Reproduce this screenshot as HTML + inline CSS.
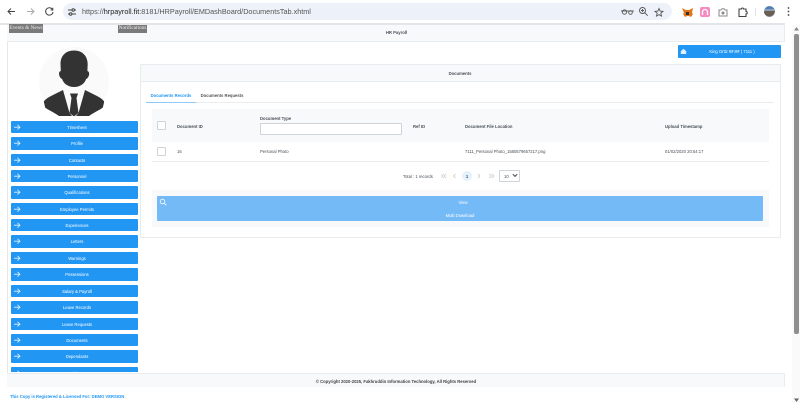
<!DOCTYPE html>
<html><head><meta charset="utf-8"><title>Documents</title>
<style>
html{background:#fff}
html,body{margin:0;padding:0;width:800px;height:403px;overflow:hidden}
body{font-family:"Liberation Sans",sans-serif;position:relative;color:#495057;background:#fff;filter:blur(.3px)}
.a{position:absolute}
.t{position:absolute;font-size:4.2px;line-height:6px;white-space:nowrap;color:#495057}
.b{font-weight:bold}
.c{transform:translateX(-50%)}
.btn{position:absolute;left:4px;width:127px;height:12.4px;box-sizing:border-box;padding-left:5px;background:#2196f3;border-radius:1px;color:#fff;font-size:4.2px;line-height:13.4px;text-align:center}
.btn svg{position:absolute;left:3px;top:3px}
.cb{position:absolute;width:7px;height:7px;background:#fff;border:.7px solid #ced4da;border-radius:1px}
</style></head><body>
<!-- browser bar -->
<div class="a" style="left:0;top:0;width:800px;height:23px;background:#fff"></div>
<svg class="a" style="left:0;top:0" width="70" height="23" fill="none" stroke-width="1">
<path d="M15 11.500H8M11 8.500l-3 3 3 3" stroke="#444"/>
<path d="M27 11.500h7M31 8.500l3 3-3 3" stroke="#aaa"/>
<path d="M52.500 9.500a3.700 3.700 0 1 0 .5 2.500M52.800 7.800v2.200h-2.200" stroke="#444"/>
</svg>
<div class="a" style="left:63px;top:3px;width:609px;height:17px;background:#edf2fa;border-radius:9px"></div>
<svg class="a" style="left:67px;top:7px" width="10" height="10" fill="none" stroke="#444" stroke-width="1"><path d="M1 3h4M7.500 3h1.500M1 7h1.500M5 7h4"/><circle cx="6.200" cy="3" r="1.200"/><circle cx="3.700" cy="7" r="1.200"/></svg>
<div class="t" style="left:82px;top:5px;font-size:7.25px;line-height:13px;color:#555">https://<span style="color:#222">hrpayroll.fit</span>:8181/HRPayroll/EMDashBoard/DocumentsTab.xhtml</div>
<svg class="a" style="left:618px;top:5px" width="50" height="14" fill="none" stroke="#555" stroke-width=".9">
<circle cx="6.500" cy="7" r="2.200"/><circle cx="12.500" cy="7.500" r="1.800"/><path d="M3 6h13"/>
<circle cx="24.500" cy="5.500" r="3"/><path d="M26.700 7.700l3 3"/><path d="M23 5.500h3M24.500 4v3"/>
<path d="M41 3.500l1.100 2.600 2.900.3-2.200 1.900.7 2.800-2.500-1.500-2.500 1.500.7-2.800-2.200-1.900 2.900-.3z"/>
</svg>
<svg class="a" style="left:680px;top:5px" width="120" height="16">
<path d="M2 3l4 2h3l4-2-1 5 1 1-2 3-2-1H7l-2 1-2-3 1-1z" fill="#e2761b"/><path d="M6 7h3v3H6z" fill="#333"/>
<rect x="20" y="2" width="10" height="10" rx="2" fill="#f78ac0"/><path d="M22.500 10V7a2.500 2.500 0 0 1 5 0v3" fill="none" stroke="#fff" stroke-width="1.300"/>
<path d="M39 5h2l1-1.300h2l1 1.300h2v6h-8z" fill="none" stroke="#888" stroke-width="1"/><circle cx="43" cy="8" r="1.500" fill="#888"/>
<path d="M59 4h2.500a1 1 0 0 1 2 0H66v2.500a1 1 0 0 1 0 2.500v2.500h-7z" fill="none" stroke="#444" stroke-width="1.100"/>
<rect x="75" y="3" width=".7" height="8" fill="#cfd8e6"/>
<circle cx="89.500" cy="6.500" r="5.500" fill="#8aa0b8"/><path d="M84.200 6h10.600a5.500 5.500 0 0 1-10.600 2z" fill="#6a5f50"/><path d="M84.800 4a5.500 5.500 0 0 1 9.400 0z" fill="#4f7fb5"/>
<circle cx="108.500" cy="3" r=".9" fill="#444"/><circle cx="108.500" cy="6.500" r=".9" fill="#444"/><circle cx="108.500" cy="10" r=".9" fill="#444"/>
</svg>
<div class="a" style="left:0;top:23px;width:785px;height:2px;background:#e3e5e8"></div>

<!-- page frame -->
<div class="a" style="left:7px;top:25px;width:.6px;height:362px;background:#e6e8ea"></div>
<div class="a" style="left:7px;top:25px;width:778px;height:16.500px;background:#f8f9fa;border-bottom:.7px solid #e9ecef;border-right:.7px solid #e9ecef;box-sizing:border-box"></div>
<div class="a" style="left:9px;top:24px;width:34px;height:9px;background:#7a7a7a;font:5.300px/8px 'Liberation Serif',serif;color:#eee;text-align:center;white-space:nowrap">Events &amp; News</div>
<div class="a" style="left:118px;top:25px;width:29px;height:8px;background:#7a7a7a;font:5.300px/7.500px 'Liberation Serif',serif;color:#eee;text-align:center;white-space:nowrap">Notifications</div>
<div class="t b c" style="left:396.500px;top:30px">HR Payroll</div>

<!-- avatar -->
<svg class="a" style="left:39px;top:47px" width="71" height="70" viewBox="0 0 71 70">
<defs><clipPath id="av"><path d="M35 0a35 35 0 0 1 31 51L62 69H8L4 51A35 35 0 0 1 35 0z"/></clipPath></defs>
<circle cx="35" cy="35" r="35" fill="#fafafa"/>
<g clip-path="url(#av)" fill="#333">
<path d="M35 3.500c-9 0-13.500 6-13.500 13.500l.3 7c-1.500.5-2 2-1.700 3.500.3 2 1.500 4 3 4.500 1.500 5 6.500 8 12 8s10.500-3 12-8c1.500-.5 2.700-2.500 3-4.500.3-1.500-.2-3-1.700-3.500l.3-7C48.500 9.500 44 3.500 35 3.500z"/>
<path d="M24 43L12 49c-5 2.500-7.500 5-8 7.500-.3 2 2 4.500 6 6.500 5 2.800 8 4.500 10 6h30c2-1.500 5-3.200 10-6 4-2 6.300-4.500 6-6.500-.5-2.500-3-5-8-7.500L46 43 39.500 66 37 69H33l-2.500-3z"/>
<path d="M31 46.500h8l-1.500 4.500 2 15-4.500 3.500-4.500-3.500 2-15z"/>
</g></svg>

<!-- sidebar -->
<div class="a" style="left:7px;top:121px;width:135px;height:251px;overflow:hidden">
<svg width="0" height="0" style="position:absolute"><defs><g id="ar" fill="none" stroke="#dff0ff" stroke-width=".8"><path d="M0 3.200h6M3.500 .8L6 3.200 3.500 5.600"/></g></defs></svg>
<div class="btn" style="top:0"><svg width="7" height="7"><use href="#ar"/></svg>Timesheet</div>
<div class="btn" style="top:16.350px"><svg width="7" height="7"><use href="#ar"/></svg>Profile</div>
<div class="btn" style="top:32.700px"><svg width="7" height="7"><use href="#ar"/></svg>Contacts</div>
<div class="btn" style="top:49.050px"><svg width="7" height="7"><use href="#ar"/></svg>Personnel</div>
<div class="btn" style="top:65.400px"><svg width="7" height="7"><use href="#ar"/></svg>Qualifications</div>
<div class="btn" style="top:81.750px"><svg width="7" height="7"><use href="#ar"/></svg>Employee Permits</div>
<div class="btn" style="top:98.100px"><svg width="7" height="7"><use href="#ar"/></svg>Experiences</div>
<div class="btn" style="top:114.450px"><svg width="7" height="7"><use href="#ar"/></svg>Letters</div>
<div class="btn" style="top:131px"><svg width="7" height="7"><use href="#ar"/></svg>Warnings</div>
<div class="btn" style="top:147.400px"><svg width="7" height="7"><use href="#ar"/></svg>Possessions</div>
<div class="btn" style="top:163.800px"><svg width="7" height="7"><use href="#ar"/></svg>Salary &amp; Payroll</div>
<div class="btn" style="top:180.200px"><svg width="7" height="7"><use href="#ar"/></svg>Leave Records</div>
<div class="btn" style="top:196.600px"><svg width="7" height="7"><use href="#ar"/></svg>Leave Requests</div>
<div class="btn" style="top:213px"><svg width="7" height="7"><use href="#ar"/></svg>Documents</div>
<div class="btn" style="top:229.400px"><svg width="7" height="7"><use href="#ar"/></svg>Dependants</div>
<div class="btn" style="top:246px"><svg width="7" height="7"><use href="#ar"/></svg>Address</div>
</div>

<!-- user button -->
<div class="a" style="left:678px;top:45px;width:103px;height:13px;background:#2196f3;border-radius:1px"></div>
<svg class="a" style="left:680px;top:48px" width="8" height="7" fill="#dff0ff"><path d="M.8 3.200L3.500.8l2.700 2.400V6H.8z"/></svg>
<div class="t c" style="left:732px;top:49px;color:#fff">King Ortiz <b>##:##</b> ( 7111 )</div>

<!-- panel -->
<div class="a" style="left:140px;top:64px;width:641px;height:174px;border:.7px solid #e9ecef;box-sizing:border-box;background:#fff"></div>
<div class="a" style="left:140px;top:64px;width:641px;height:17.500px;background:#f8f9fa;border:.7px solid #e9ecef;box-sizing:border-box"></div>
<div class="t b c" style="left:460px;top:70.500px">Documents</div>

<!-- tabs -->
<div class="a" style="left:146px;top:102px;width:628px;height:.8px;background:#e9ecef"></div>
<div class="a" style="left:146px;top:102px;width:50px;height:1px;background:#90caf9"></div>
<div class="t b c" style="left:171px;top:92.500px;color:#2196f3">Documents Records</div>
<div class="t b c" style="left:222px;top:92.500px;color:#555">Documents Requests</div>

<!-- table -->
<div class="a" style="left:152px;top:109px;width:617px;height:33px;background:#f8f9fa"></div>
<div class="a" style="left:152px;top:161px;width:617px;height:.7px;background:#e9ecef"></div>
<div class="cb" style="left:157px;top:121px"></div>
<div class="cb" style="left:157px;top:147px"></div>
<div class="t b" style="left:177px;top:123.500px">Document ID</div>
<div class="t b" style="left:260px;top:115.500px">Document Type</div>
<div class="a" style="left:260px;top:123px;width:142px;height:12px;background:#fff;border:.7px solid #ced4da;box-sizing:border-box;border-radius:1px"></div>
<div class="t b" style="left:413px;top:123.500px">Ref ID</div>
<div class="t b" style="left:465px;top:123.500px">Document File Location</div>
<div class="t b" style="left:665px;top:123.500px">Upload Timestamp</div>
<div class="t" style="left:177px;top:149px">16</div>
<div class="t" style="left:260px;top:149px">Personal Photo</div>
<div class="t" style="left:465px;top:149px">7111_Personal Photo_1580579657217.png</div>
<div class="t" style="left:665px;top:149px">01/02/2020 20:54:17</div>

<!-- paginator -->
<div class="t" style="left:403px;top:173.500px">Total : 1 records</div>
<svg class="a" style="left:440px;top:172px" width="56" height="8" fill="none" stroke="#bbb" stroke-width=".6">
<path d="M3.500 2L1.500 4l2 2M6 2L4 4l2 2M15.500 2l-2 2 2 2M38 2l2 2-2 2M49.500 2l2 2-2 2M52 2l2 2-2 2"/>
</svg>
<div class="a" style="left:462px;top:171px;width:10px;height:10px;border-radius:50%;background:#e3f2fd"></div>
<div class="t b c" style="left:467px;top:173.500px">1</div>
<div class="a" style="left:499px;top:170px;width:21px;height:12px;background:#fff;border:.7px solid #ced4da;box-sizing:border-box;border-radius:1px"></div>
<div class="t" style="left:504px;top:173.500px">10</div>
<svg class="a" style="left:512px;top:173px" width="6" height="5" fill="none" stroke="#444" stroke-width="1"><path d="M.8 1.200L3 3.400l2.200-2.200"/></svg>

<!-- action bar -->
<div class="a" style="left:152px;top:190px;width:617px;height:37px;background:#f8f9fa"></div>
<div class="a" style="left:157px;top:196px;width:606px;height:24.500px;background:#74baf7;border-radius:1px"></div>
<svg class="a" style="left:159px;top:198px" width="8" height="8" fill="none" stroke="#fff" stroke-width=".8"><circle cx="3.500" cy="3.500" r="2.300"/><path d="M5.300 5.300l2 2"/></svg>
<div class="t c" style="left:463px;top:199.500px;color:#fff">View</div>
<div class="t c" style="left:460px;top:212.500px;color:#fff">Multi Download</div>

<!-- footer -->
<div class="a" style="left:7px;top:372.500px;width:778px;height:14.500px;background:#f8f9fa;border-top:.7px solid #e9ecef;border-right:.7px solid #e9ecef;box-sizing:border-box"></div>
<div class="t b c" style="left:396px;top:378.500px;color:#444">© Copyright 2020-2025, Fakhruddin Information Technology, All Rights Reserved</div>
<div class="t b" style="left:10px;top:393.500px;color:#2196f3">This Copy is Registered &amp; Licensed For: DEMO VERSION</div>

<!-- scrollbar -->
<div class="a" style="left:792px;top:25px;width:8px;height:378px;background:#fafafa"></div>
<div class="a" style="left:794px;top:34px;width:4.500px;height:300px;background:#8f8f8f;border-radius:2px"></div>
<svg class="a" style="left:792px;top:26px" width="8" height="6" fill="#888"><path d="M4.500 1L7 4.500H2z"/></svg>
<svg class="a" style="left:792px;top:398px" width="8" height="6" fill="#666"><path d="M2 .5h5L4.500 4z"/></svg>
</body></html>
